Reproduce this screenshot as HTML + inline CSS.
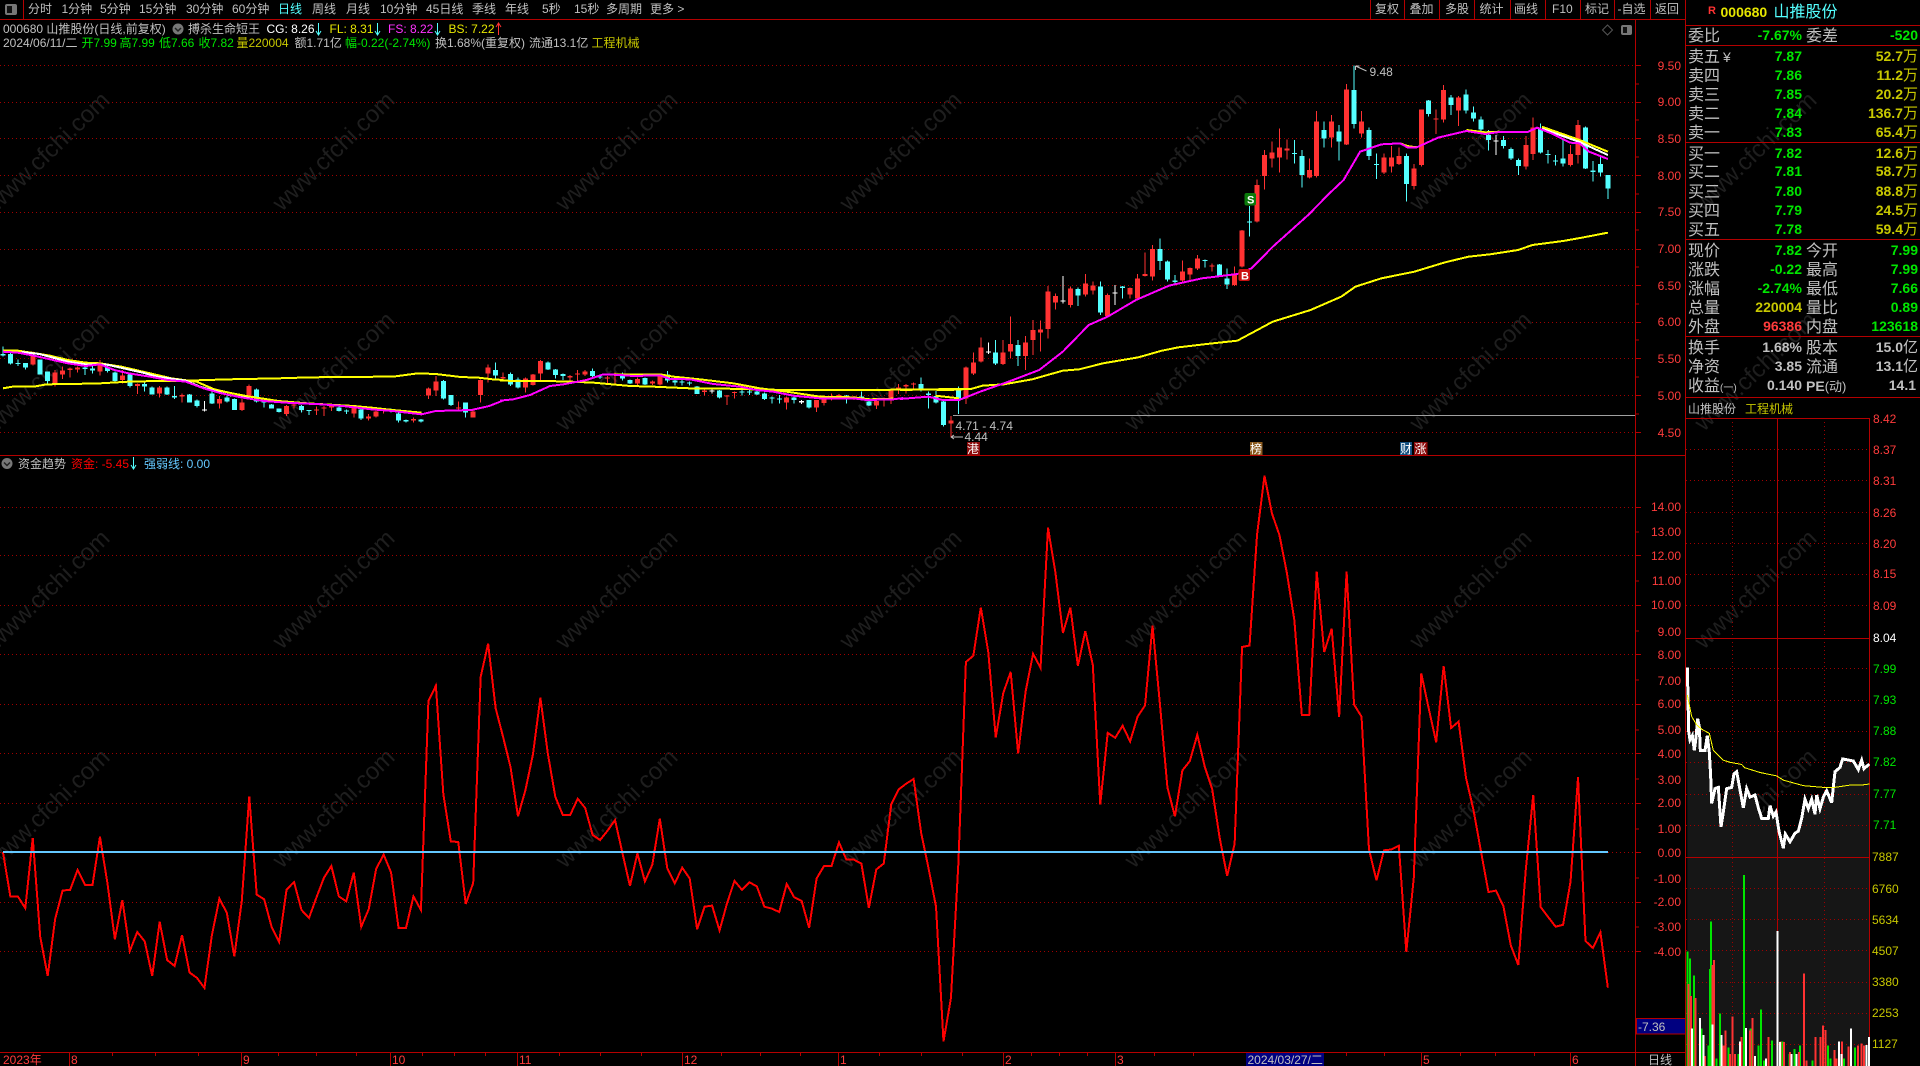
<!DOCTYPE html>
<html lang="zh"><head><meta charset="utf-8"><title>山推股份 000680</title>
<style>
html,body{margin:0;padding:0;background:#000;overflow:hidden;width:1920px;height:1066px}
svg{display:block}
text{font-family:"Liberation Sans","WenQuanYi Zen Hei","Noto Sans CJK SC",sans-serif;font-size:12px;white-space:pre}
.g{fill:#c0c0c0}.r{fill:#ff3c3c}.gr{fill:#00e600}.y{fill:#e6e600}.au{fill:#c8c800}.cy{fill:#54ffff}.m{fill:#ff32ff}.w{fill:#fff}.bl{fill:#64c8ff}
.L text{font-size:16px;fill:#c0c0c0}
.V text,text.V{font-size:14px;font-weight:bold}
.V tspan{font-size:15px}
.e{text-anchor:end}
.wm{font-size:24px;fill:#1e1e1e}
.ln{fill:none;vector-effect:non-scaling-stroke}
path,polyline{vector-effect:non-scaling-stroke}
.crisp{shape-rendering:crispEdges}
.wr,.wc,.ww,.br,.bc,.bw{fill:none}
.wr{stroke:#ff3232;stroke-width:1}.wc{stroke:#54ffff;stroke-width:1}.ww{stroke:#fff;stroke-width:1}
.br{stroke:#ff3232;stroke-width:5}.bc{stroke:#54ffff;stroke-width:5}.bw{stroke:#fff;stroke-width:5}
.mag{stroke:#ff00ff;stroke-width:2}.yel{stroke:#ffff00;stroke-width:2}.whi{stroke:#fff;stroke-width:2}
</style></head><body>
<svg width="1920" height="1066" viewBox="0 0 1920 1066" xmlns="http://www.w3.org/2000/svg">
<!-- watermark -->
<g text-anchor="middle">
<text class="wm" transform="translate(54 157) rotate(-44)">www.cfchi.com</text><text class="wm" transform="translate(339 157) rotate(-44)">www.cfchi.com</text><text class="wm" transform="translate(622 157) rotate(-44)">www.cfchi.com</text><text class="wm" transform="translate(906 157) rotate(-44)">www.cfchi.com</text><text class="wm" transform="translate(1191 157) rotate(-44)">www.cfchi.com</text><text class="wm" transform="translate(1476 157) rotate(-44)">www.cfchi.com</text><text class="wm" transform="translate(1761 157) rotate(-44)">www.cfchi.com</text>
<text class="wm" transform="translate(54 377) rotate(-44)">www.cfchi.com</text><text class="wm" transform="translate(339 377) rotate(-44)">www.cfchi.com</text><text class="wm" transform="translate(622 377) rotate(-44)">www.cfchi.com</text><text class="wm" transform="translate(906 377) rotate(-44)">www.cfchi.com</text><text class="wm" transform="translate(1191 377) rotate(-44)">www.cfchi.com</text><text class="wm" transform="translate(1476 377) rotate(-44)">www.cfchi.com</text><text class="wm" transform="translate(1761 377) rotate(-44)">www.cfchi.com</text>
<text class="wm" transform="translate(54 595) rotate(-44)">www.cfchi.com</text><text class="wm" transform="translate(339 595) rotate(-44)">www.cfchi.com</text><text class="wm" transform="translate(622 595) rotate(-44)">www.cfchi.com</text><text class="wm" transform="translate(906 595) rotate(-44)">www.cfchi.com</text><text class="wm" transform="translate(1191 595) rotate(-44)">www.cfchi.com</text><text class="wm" transform="translate(1476 595) rotate(-44)">www.cfchi.com</text><text class="wm" transform="translate(1761 595) rotate(-44)">www.cfchi.com</text>
<text class="wm" transform="translate(54 814) rotate(-44)">www.cfchi.com</text><text class="wm" transform="translate(339 814) rotate(-44)">www.cfchi.com</text><text class="wm" transform="translate(622 814) rotate(-44)">www.cfchi.com</text><text class="wm" transform="translate(906 814) rotate(-44)">www.cfchi.com</text><text class="wm" transform="translate(1191 814) rotate(-44)">www.cfchi.com</text><text class="wm" transform="translate(1476 814) rotate(-44)">www.cfchi.com</text><text class="wm" transform="translate(1761 814) rotate(-44)">www.cfchi.com</text>
</g>
<!-- mini chart area fill -->
<g transform="translate(1660 400) scale(.33333 .42474)">
<polygon fill="#161616" points="82,630 84,700 86,780 90,800 97,790 103,825 108,795 113,750 118,770 121,825 135,825 142,790 148,830 152,885 155,950 165,915 175,912 183,1005 190,970 200,915 215,912 222,880 230,875 237,905 250,960 260,915 270,935 285,930 295,960 305,985 325,985 330,955 340,980 348,970 357,1015 370,1055 376,1022 390,1040 405,1020 415,1015 425,985 435,940 445,962 455,940 465,975 470,930 480,962 490,935 500,920 515,948 525,875 540,865 548,845 580,850 595,870 605,848 612,868 628,857 628,1568 82,1568"/>
</g>
<!-- dotted grids -->
<path class="crisp" fill="none" stroke="#a00000" stroke-width="1" stroke-dasharray="1 3" d="M0 65.5H1635M0 102.5H1635M0 138.5H1635M0 175.5H1635M0 212.5H1635M0 249.5H1635M0 285.5H1635M0 322.5H1635M0 358.5H1635M0 395.5H1635M0 432.5H1635M0 507.5H1635M0 555.5H1635M0 605.5H1635M0 654.5H1635M0 704.5H1635M0 753.5H1635M0 803.5H1635M0 852.5H1635M0 902.5H1635M0 951.5H1635
M1686 449.5H1869M1686 480.5H1869M1686 512.5H1869M1686 543.5H1869M1686 574.5H1869M1686 605.5H1869M1686 668.5H1869M1686 700.5H1869M1686 731.5H1869M1686 762.5H1869M1686 794.5H1869M1686 825.5H1869M1686 888.5H1869M1686 919.5H1869M1686 950.5H1869M1686 982.5H1869M1686 1013.5H1869M1686 1044.5H1869M1732.5 418V1066M1824.5 418V1066"/>
<!-- solid frame -->
<path class="crisp" fill="none" stroke="#b40000" stroke-width="1" d="M0 19.5H1686M23.5 0V19M1370.5 0V19M1404.5 0V19M1439.5 0V19M1474.5 0V19M1510.5 0V19M1545.5 0V19M1580.5 0V19M1614.5 0V19M1650.5 0V19M0 455.5H1686M0 1052.5H1686M1635.5 19V1066M1685.5 0V1066
M1686 25.5H1920M1686 45.5H1920M1686 142.5H1920M1686 239.5H1920M1686 336.5H1920M1686 397.5H1920M1686 418.5H1869M1686 638.5H1869M1686 857.5H1869M1777.5 418V1066M1869.5 418V1066
M1635 65.5H1641M1635 84H1639M1635 102.5H1641M1635 120H1639M1635 138.5H1641M1635 157H1639M1635 175.5H1641M1635 194H1639M1635 212.5H1641M1635 230H1639M1635 249.5H1641M1635 267H1639M1635 285.5H1641M1635 304H1639M1635 322.5H1641M1635 340H1639M1635 358.5H1641M1635 377H1639M1635 395.5H1641M1635 414H1639M1635 432.5H1641
M1635 507.5H1641M1635 532H1639M1635 555.5H1641M1635 581H1639M1635 605.5H1641M1635 631H1639M1635 654.5H1641M1635 680H1639M1635 704.5H1641M1635 730H1639M1635 753.5H1641M1635 779H1639M1635 803.5H1641M1635 829H1639M1635 852.5H1641M1635 878H1639M1635 902.5H1641M1635 927H1639M1635 951.5H1641
M69.5 1052V1066M241.5 1052V1066M390.5 1052V1066M517.5 1052V1066M682.5 1052V1066M838.5 1052V1066M1003.5 1052V1066M1115.5 1052V1066M1246.5 1052V1066M1421.5 1052V1066M1570.5 1052V1066
M112.5 1052V1056M155.5 1052V1056M198.5 1052V1056M278.5 1052V1056M316.5 1052V1056M356.5 1052V1056M422.5 1052V1056M454.5 1052V1056M485.5 1052V1056M559.5 1052V1056M600.5 1052V1056M641.5 1052V1056M721.5 1052V1056M760.5 1052V1056M800.5 1052V1056M879.5 1052V1056M921.5 1052V1056M962.5 1052V1056M1031.5 1052V1056M1059.5 1052V1056M1087.5 1052V1056M1154.5 1052V1056M1193.5 1052V1056M1346.5 1052V1056M1384.5 1052V1056M1460.5 1052V1056M1495.5 1052V1056M1534.5 1052V1056"/>
<path class="crisp" fill="none" stroke="#a0a0a0" stroke-width="1" d="M953 415.5H1635"/>
<!-- candles A -->
<g class="crisp" transform="translate(2.9 330) scale(7.465 .33333)">
<path class="wr" d="M4 65V106M7 120V170M8 110V147M9 113V143M10 110V128M13 90V137M16 120V160M18 160V192M21 168V203M24 190V218M29 198V236M32 207V243M33 163V205M38 225V258M39 222V236M42 230V255M43 228V258M44 225V243M47 230V263M49 252V272M50 240V262M51 235V250M55 262V278M57 172V207M58 138V198M61 215V238M63 235V263M64 148V218M65 103V158"/>
<path class="br" d="M4 75V103M7 128V160M8 122V133M9 116V120M10 113V118M13 103V125M16 137V150M18 162V168M21 172V190M24 195V200M29 207V220M32 218V240M33 168V198M38 228V252M39 224V227M42 239V242M43 233V236M44 227V232M47 233V250M49 260V265M50 245V260M51 238V241M55 267V271M57 175V197M58 155V182M61 232V235M63 245V262M64 150V195M65 113V130"/>
<path class="wc" d="M0 50V80M1 68V103M2 88V108M3 99V118M5 88V133M6 125V165M11 110V135M12 108V130M14 105V128M15 125V155M17 130V172M19 158V185M20 170V194M22 170V195M23 168V207M25 192V218M26 208V233M28 185V222M30 198V218M31 205V240M34 175V218M35 210V233M36 222V235M37 235V248M40 225V248M41 240V255M45 230V245M46 238V252M48 236V270M52 235V248M53 248V278M54 268V278M56 267V278M59 150V208M60 195V228M62 217V263M66 97V145"/>
<path class="bc" d="M0 72V76M1 72V100M2 99V102M3 99V112M5 88V133M6 125V153M11 113V117M12 116V121M14 112V123M15 127V153M17 133V168M19 162V170M20 172V194M22 172V194M23 198V203M25 194V218M26 212V228M28 190V220M30 203V215M31 207V240M34 178V215M35 215V218M36 223V235M37 236V246M40 228V240M41 240V243M45 232V243M46 242V245M48 238V266M52 238V241M53 250V272M54 270V275M56 268V275M59 153V205M60 195V225M62 218V247M66 120V137"/>
<path class="ww" d="M27 213V245"/><path class="bw" d="M27 238V241"/>
</g>
<!-- candles B -->
<g class="crisp" transform="translate(2.9 340) scale(7.465 .33333)">
<path class="wr" d="M67 98V125M70 112V157M71 102V137M72 60V120M76 105V125M77 90V125M78 90V108M81 108V130M82 97V130M85 112V135M87 122V135M88 103V137M94 148V167M97 165V195M98 155V175M105 170V208M109 180V216M110 175V197M111 160V182M112 162V178M114 168V180M117 178V207M118 172V200M119 150V192M120 132V162M121 132V160M122 128V150"/>
<path class="br" d="M67 111V115M70 116V143M71 103V135M72 63V100M76 108V112M77 100V104M78 95V103M81 112V116M82 101V104M85 117V130M87 125V131M88 106V133M94 152V156M97 167V170M98 156V159M105 172V188M109 180V203M110 178V189M111 175V177M112 165V172M114 172V175M117 183V197M118 178V182M119 152V180M120 142V152M121 135V139M122 130V133"/>
<path class="wc" d="M68 98V138M69 113V145M73 65V90M74 87V115M75 100V120M79 85V113M80 105V117M83 98V122M84 118V132M86 112V135M89 93V128M90 120V137M91 120V137M92 125V137M93 138V162M96 150V175M99 148V167M100 148V165M101 152V165M102 157V180M103 170V190M104 165V190M106 170V190M108 180V205M113 165V190M115 155V180M116 178V198M123 112V155M124 155V205M125 153V190"/>
<path class="bc" d="M68 102V133M69 118V143M73 67V88M74 88V105M75 102V108M79 93V108M80 110V113M83 100V115M84 120V130M86 114V133M89 103V122M90 122V127M91 125V128M92 128V131M93 140V162M96 152V172M99 155V158M100 155V157M101 154V164M102 160V177M103 172V176M104 175V179M106 172V180M108 180V203M113 167V178M115 170V173M116 185V197M123 132V150M124 160V165M125 168V188"/>
<path class="ww" d="M95 145V160M107 180V192"/><path class="bw" d="M95 152V155M107 183V187"/>
</g>
<!-- candles C -->
<g class="crisp" transform="translate(2.9 50) scale(7.465 .33333)">
<path class="wr" d="M127 1098V1162M129 950V1062M130 907V975M131 862V938M134 870V945M135 800V925M137 858V960M138 810V915M139 812V905M140 708V865M141 730V778M143 710V772M145 672V740M146 695V733M148 730V803M151 712V745M152 672V745M153 608V680M154 585V692M158 632V700M159 652V695M160 615V660M162 640V665M165 650V708M166 540V652M168 388V518M169 300V418M170 275V352M171 235V368M172 268V328M175 325V385M176 183V382M178 195V292M180 102V285M182 183V262M185 310V372M186 288V368M187 292V345M189 342V418M190 178V350M192 178V252M193 105V218M195 138V228M204 258V358"/>
<path class="br" d="M127 1112V1120M129 952V1045M130 937V970M131 892V935M134 907V942M135 882V905M137 877V918M138 840V870M139 838V848M140 725V837M141 738V757M143 715V765M145 700V733M146 706V722M148 735V798M151 714V733M152 686V745M153 672V678M154 597V680M158 665V692M159 654V673M160 625V655M162 646V650M165 675V705M166 541V650M168 405V515M169 315V378M170 308V325M171 292V322M172 295V302M175 360V382M176 215V378M178 215V262M180 118V283M182 215V250M185 322V368M186 322V350M187 318V342M189 355V408M190 178V345M192 206V209M193 120V208M195 142V182M204 285V350"/>
<path class="wc" d="M126 1050V1130M128 1010V1092M133 870V945M136 870V948M144 712V768M147 695V795M150 708V745M155 565V660M156 632V695M157 675V705M161 628V652M163 642V680M164 655V717M167 468V560M173 270V340M174 300V412M177 215V292M179 225V332M181 47V235M183 232V330M184 310V387M188 310V455M191 150V200M194 135V195M196 118V190M197 170V215M198 200V245M199 240V302M201 258V295M202 292V330M203 325V375"/>
<path class="bc" d="M126 1055V1125M128 1015V1045M133 907V940M136 885V918M144 717V737M147 710V788M150 710V714M155 597V633M156 635V688M157 692V696M161 630V633M163 644V678M164 686V703M167 515V518M173 309V312M174 318V375M177 240V265M179 245V275M181 120V222M183 240V318M184 342V345M188 318V402M191 152V192M194 142V165M196 133V182M197 188V205M198 208V238M199 255V270M201 270V288M202 297V325M203 330V348"/>
<path class="ww" d="M132 877V912M142 678V760M149 705V765M200 255V315"/><path class="bw" d="M132 905V908M142 752V755M149 727V730M200 272V275"/>
</g>
<!-- candles D -->
<g class="crisp" transform="translate(2.9 0) scale(7.465 .33333)">
<path class="wr" d="M205 352V480M210 435V500M211 360V490"/><path class="br" d="M205 382V462M210 462V495M211 375V465"/>
<path class="wc" d="M206 370V460M207 450V490M208 465V497M209 415V500M212 380V507M213 483V545M214 465V530M215 525V597"/>
<path class="bc" d="M206 385V458M207 462V465M208 482V485M209 475V490M212 382V505M213 512V516M214 492V517M215 525V565"/>
</g>
<!-- MA lines -->
<g class="crisp" transform="translate(0 330) scale(.35714 .33333)">
<polyline class="ln yel" points="8,175 35,170 95,170 130,163 200,162 280,160 360,155 440,153 520,152 640,148 780,145 870,142 1070,140 1100,140 1170,130 1220,132 1290,141 1340,143 1380,148 1410,150"/>
<polyline class="ln yel" points="8,62 50,62 100,70 140,77 190,90 240,98 280,100 340,110 400,125 440,135 480,145 550,155 600,178 650,190 700,200 780,213 860,220 990,228 1040,233 1100,240 1180,248"/>
<polyline class="ln whi" points="60,66 110,72 190,95 240,103 300,104 400,128 440,140 520,152 560,170 640,195 700,205"/>
<polyline class="ln mag" points="8,65 50,68 95,77 140,88 190,100 240,108 280,103 320,120 360,130 420,140 470,150 520,155 570,175 620,190 680,203 740,213 800,218 900,223 960,228 1040,238 1100,243 1180,253 1220,243 1320,240 1370,228 1410,211"/>
</g>
<g class="crisp" transform="translate(500 340) scale(.33333 .33333)">
<polyline class="ln yel" points="0,122 190,124 280,128 390,138 460,140 570,145 640,145 760,148 860,150 1130,150 1240,148 1350,150 1400,147"/>
<polyline class="ln yel" points="330,103 480,103 520,110 600,118 700,130 780,145 860,155 960,170 1060,172 1110,178 1180,176"/>
<polyline class="ln mag" points="0,182 40,178 90,165 150,138 190,133 260,120 310,103 360,105 400,108 480,106 510,117 570,118 640,132 720,140 770,150 820,155 880,167 960,175 1060,175 1100,180 1180,178 1210,174"/>
</g>
<g class="crisp" transform="translate(900 50) scale(.47192 .33333)">
<polyline class="ln yel" points="0,1020 110,1017 150,1017 175,1007 220,1003 280,988 345,962 380,958 430,940 505,922 555,902 590,892 650,882 715,872 790,815 870,780 935,740 965,710 1020,685 1090,665 1155,637 1205,620 1250,613 1310,600 1340,585 1405,573 1445,563 1500,548"/>
<polyline class="ln yel" points="75,1037 125,1045"/>
<polyline class="ln yel" points="1060,280 1075,288 1095,292"/>
<polyline class="ln yel" points="1200,240 1240,247 1270,245"/>
<polyline class="ln yel" points="1360,230 1440,270 1500,305"/>
<polyline class="ln whi" points="1360,236 1440,276 1500,315"/>
<polyline class="ln mag" points="0,1047 60,1040 90,1050 125,1050 170,1025 230,995 295,960 345,905 400,825 440,800 500,750 570,707 640,685 715,672 745,655 790,590 865,495 910,430 940,390 975,305 1020,283 1060,280 1075,292 1095,292 1140,263 1200,243 1240,252 1270,246 1330,246 1350,233 1380,250 1420,278 1440,280 1460,305 1500,327"/>
</g>
<!-- indicator -->
<g class="crisp" transform="translate(2.9 0) scale(7.465 1)">
<polyline class="ln" stroke="#ff0000" stroke-width="2" points="0,851.8 1,896.4 2,896.4 3,908.2 4,837.9 5,936.8 6,976 7,919 8,890.4 9,890 10,870 11,885 12,885 13,836.8 14,883 15,939.3 16,900 17,951 18,932 19,941.4 20,976 21,921.8 22,960 23,966 24,935 25,972.5 26,977.9 27,987.9 28,935 29,898.6 30,912.9 31,956.4 32,901 33,796.4 34,894.6 35,899.3 36,927 37,942 38,889.6 39,882 40,910 41,918 42,897.5 43,877.9 44,866 45,896.4 46,901.4 47,872.5 48,926.8 49,909.3 50,869 51,854.6 52,872.5 53,927.9 54,927.9 55,896.4 56,910 57,701 58,685.7 59,794 60,841.4 61,842 62,904 63,883 64,677 65,643.6 66,708 67,736.8 68,767 69,816.4 70,790 71,754.6 72,697.7 73,753.6 74,796.8 75,814.9 76,814.9 77,798.7 78,808 79,835 80,840 81,830.7 82,820 83,853.3 84,886 85,853.3 86,881.5 87,864.6 88,818.7 89,868.3 90,883.4 91,867.6 92,878.5 93,929.3 94,906.7 95,905.6 96,930.5 97,903.4 98,880.8 99,889.8 100,882.3 101,886.4 102,906.7 103,908.6 104,912 105,884 106,897.3 107,901 108,927.8 109,878.5 110,866 111,866 112,842.4 113,859.7 114,859.7 115,863.5 116,907.9 117,869.5 118,863.5 119,804.4 120,789.3 121,783.7 122,779 123,832.6 124,868.3 125,906.7 126,1041.5 127,998 128,862.7 129,662 130,655.7 131,607.5 132,652 133,737.4 134,693.3 135,671.9 136,753.6 137,691.5 138,653.8 139,667.8 140,527.7 141,572.9 142,633 143,607.5 144,665.9 145,631 146,665 147,804.4 148,732.9 149,737.8 150,725.7 151,741.5 152,716.7 153,705.4 154,625.6 155,704.6 156,787.4 157,816.4 158,770.5 159,761 160,734.7 161,766.7 162,789.3 163,838 164,875.9 165,843.9 166,647 167,645.5 168,535 169,475.8 170,513.4 171,535 172,572.9 173,620 174,714.8 175,714.8 176,571.8 177,652 178,628.6 179,716.7 180,571.8 181,704.6 182,716.7 183,849.5 184,880.4 185,850.3 186,849.5 187,845.8 188,951.9 189,877.8 190,673.4 191,708.4 192,742.3 193,665.9 194,728 195,721.6 196,778 197,810 198,851.4 199,892 200,890.6 201,906 202,945.5 203,965 204,870 205,795 206,907 207,917 208,926.7 209,924.8 210,881.5 211,777.3 212,941 213,948 214,932.3 215,987.7"/>
</g>
<path class="crisp" stroke="#64c8ff" stroke-width="2" fill="none" d="M3 852H1608"/>
<!-- mini chart -->
<g transform="translate(1660 400) scale(.33333 .42474)">
<path class="ln crisp" stroke="#00e600" stroke-width="2" d="M82 1298V1568M90 1315V1568M102 1355V1568M125 1480V1568M145 1520V1568M150 1340V1568M153 1228V1568M170 1550V1568M180 1445V1568M205 1525V1568M235 1540V1568M252 1118V1568M272 1480V1568M295 1520V1568M303 1435V1568M312 1555V1568M336 1508V1568M368 1510V1568M388 1540V1568M403 1528V1568M420 1520V1568M458 1555V1568M504 1520V1568M512 1550V1568M552 1550V1568M585 1525V1568"/>
<path class="ln crisp" stroke="#ff3232" stroke-width="2" d="M85 1375V1568M93 1403V1568M107 1408V1568M135 1545V1568M158 1330V1568M162 1318V1568M190 1520V1568M197 1485V1568M210 1540V1568M218 1452V1568M225 1540V1568M245 1500V1568M270 1485V1568M278 1455V1568M325 1500V1568M362 1510V1568M372 1512V1568M390 1535V1568M417 1535V1568M432 1350V1568M440 1555V1568M467 1500V1568M482 1500V1568M489 1473V1568M497 1483V1568M524 1530V1568M530 1550V1568M546 1510V1568M566 1522V1568M594 1520V1568M605 1515V1568M612 1520V1568"/>
<path class="ln crisp" stroke="#ffffff" stroke-width="2" d="M96 1480V1568M120 1455V1568M130 1495V1568M157 1470V1568M185 1495V1568M240 1510V1568M258 1478V1568M285 1545V1568M318 1550V1568M353 1250V1568M360 1512V1568M395 1540V1568M410 1540V1568M537 1510V1568M545 1540V1568M573 1480V1568M620 1518V1568M627 1500V1568"/>
<polyline class="ln crisp" stroke="#ffffff" stroke-width="3" points="82,630 84,700 86,780 90,800 97,790 103,825 108,795 113,750 118,770 121,825 135,825 142,790 148,830 152,885 155,950 165,915 175,912 183,1005 190,970 200,915 215,912 222,880 230,875 237,905 250,960 260,915 270,935 285,930 295,960 305,985 325,985 330,955 340,980 348,970 357,1015 370,1055 376,1022 390,1040 405,1020 415,1015 425,985 435,940 445,962 455,940 465,975 470,930 480,962 490,935 500,920 515,948 525,875 540,865 548,845 580,850 595,870 605,848 612,868 628,857"/>
<polyline class="ln crisp" stroke="#ffff00" stroke-width="1" points="82,695 95,745 110,765 125,775 148,785 160,825 190,848 210,853 245,858 255,866 300,877 350,885 370,895 430,908 490,912 525,912 575,906 610,906 628,904"/>
</g>
<!-- top toolbar -->
<rect x="5" y="4" width="12" height="11" rx="2" fill="#777"/><rect x="7" y="6" width="5" height="7" fill="#111"/>
<g class="g">
<text x="28" y="13">分时</text><text x="61.5" y="13">1分钟</text><text x="100" y="13">5分钟</text><text x="139" y="13">15分钟</text><text x="186" y="13">30分钟</text><text x="232" y="13">60分钟</text><text class="cy" x="278" y="13">日线</text><text x="312" y="13">周线</text><text x="346" y="13">月线</text><text x="380" y="13">10分钟</text><text x="426" y="13">45日线</text><text x="472" y="13">季线</text><text x="505" y="13">年线</text><text x="542" y="13">5秒</text><text x="574" y="13">15秒</text><text x="606" y="13">多周期</text><text x="650" y="13">更多 &gt;</text>
<text x="1375" y="13">复权</text><text x="1409.5" y="13">叠加</text><text x="1445" y="13">多股</text><text x="1479.5" y="13">统计</text><text x="1514" y="13">画线</text><text x="1552" y="13">F10</text><text x="1585" y="13">标记</text><text x="1617.5" y="13">-自选</text><text x="1655" y="13">返回</text>
</g>
<!-- chart header -->
<text class="g" x="3" y="33">000680 山推股份(日线,前复权)</text>
<circle cx="178" cy="29" r="5.5" fill="#777"/><path d="M175 28l3 3 3-3" fill="none" stroke="#222" stroke-width="1.5"/>
<text class="g" x="188" y="33">搏杀生命短王</text>
<text class="w" x="266.5" y="33">CG: 8.26</text>
<path fill="none" stroke="#54ffff" d="M318.5 23V35M316 31l2.500 4 2.500-4M377.500 23V35M375 31l2.500 4 2.500-4M437.500 23V35M435 31l2.500 4 2.500-4"/>
<text class="y" x="329.500" y="33">FL: 8.31</text>
<text class="m" x="388" y="33">FS: 8.22</text>
<text class="y" x="448.500" y="33">BS: 7.22</text>
<path fill="none" stroke="#ff3232" d="M498.500 23V35M496 27l2.500-4 2.500 4"/>
<text class="g" x="3" y="47">2024/06/11/二</text>
<text class="gr" x="81.500" y="47">开7.99</text><text class="gr" x="119.500" y="47">高7.99</text><text class="gr" x="159" y="47">低7.66</text><text class="gr" x="198.500" y="47">收7.82</text>
<text class="au" x="236.500" y="47">量220004</text><text class="g" x="294.500" y="47">额1.71亿</text>
<text class="gr" x="345" y="47">幅-0.22(-2.74%)</text><text class="g" x="435" y="47">换1.68%(重复权)</text><text class="g" x="529" y="47">流通13.1亿</text><text class="au" x="591.500" y="47">工程机械</text>
<!-- top right icons -->
<path d="M1607.500 25l5 5-5 5-5-5z" fill="none" stroke="#555"/>
<rect x="1621" y="25" width="11" height="10" rx="2" fill="#777"/><rect x="1623" y="27" width="4" height="6" fill="#111"/>
<!-- price annotations -->
<path fill="none" stroke="#c0c0c0" d="M1355.500 66l11 5M1355.500 66l4 0M1355.500 66v4"/>
<text class="g" x="1369.500" y="76">9.48</text>
<text class="g" x="955.500" y="430">4.71 - 4.74</text>
<path fill="none" stroke="#c0c0c0" d="M951 437h12M951 437l3-2M951 437l3 2"/>
<text class="g" x="964.500" y="441">4.44</text>
<rect x="967" y="442" width="13" height="13" fill="#8b0a0a"/><text class="w" x="967" y="453">港</text>
<rect x="1250" y="442" width="12.500" height="13" fill="#8b5a1e"/><text class="w" x="1250" y="453">榜</text>
<rect x="1400" y="442" width="12" height="13" fill="#104e7e"/><text class="w" x="1400" y="453">财</text>
<rect x="1414" y="442" width="13.500" height="13" fill="#8b0a0a"/><text class="w" x="1414.500" y="453">涨</text>
<rect x="1244.500" y="193" width="11.500" height="12.500" rx="2" fill="#0a7a0a"/><text class="w" x="1247" y="203.500" style="font-size:11px;font-weight:bold">S</text>
<rect x="1238.500" y="269" width="11.500" height="12" rx="2" fill="#cc1010"/><text class="w" x="1241" y="279.500" style="font-size:11px;font-weight:bold">B</text>
<!-- price axis -->
<g class="r e">
<text x="1681" y="70">9.50</text><text x="1681" y="106">9.00</text><text x="1681" y="143">8.50</text><text x="1681" y="180">8.00</text><text x="1681" y="216">7.50</text><text x="1681" y="253">7.00</text><text x="1681" y="290">6.50</text><text x="1681" y="326">6.00</text><text x="1681" y="363">5.50</text><text x="1681" y="400">5.00</text><text x="1681" y="437">4.50</text>
<text x="1681" y="511">14.00</text><text x="1681" y="536">13.00</text><text x="1681" y="560">12.00</text><text x="1681" y="585">11.00</text><text x="1681" y="609">10.00</text><text x="1681" y="636">9.00</text><text x="1681" y="659">8.00</text><text x="1681" y="685">7.00</text><text x="1681" y="708">6.00</text><text x="1681" y="734">5.00</text><text x="1681" y="758">4.00</text><text x="1681" y="784">3.00</text><text x="1681" y="807">2.00</text><text x="1681" y="833">1.00</text><text x="1681" y="857">0.00</text><text x="1681" y="883">-1.00</text><text x="1681" y="906">-2.00</text><text x="1681" y="931">-3.00</text><text x="1681" y="956">-4.00</text>
</g>
<rect class="crisp" x="1636.500" y="1018.500" width="49" height="15.500" fill="#000080" stroke="#b40000"/>
<text class="g" x="1638" y="1031">-7.36</text>
<text class="g" x="1648" y="1064">日线</text>
<!-- indicator header -->
<circle cx="7" cy="463.500" r="5.500" fill="#777"/><path d="M4 462.500l3 3 3-3" fill="none" stroke="#222" stroke-width="1.500"/>
<text class="g" x="18" y="468">资金趋势</text>
<text fill="#ff0000" x="71" y="468">资金: -5.45</text>
<path fill="none" stroke="#54ffff" d="M133.500 457V469M131 465l2.500 4 2.500-4"/>
<text class="bl" x="144" y="468">强弱线: 0.00</text>
<!-- bottom axis -->
<g class="r">
<text x="3" y="1064">2023年</text><text x="71" y="1064">8</text><text x="243" y="1064">9</text><text x="392" y="1064">10</text><text x="519" y="1064">11</text><text x="684" y="1064">12</text><text x="840" y="1064">1</text><text x="1005" y="1064">2</text><text x="1117" y="1064">3</text><text x="1423" y="1064">5</text><text x="1572" y="1064">6</text>
</g>
<rect x="1246" y="1053" width="78" height="13" fill="#000080"/>
<text class="g" x="1247.500" y="1064">2024/03/27/二</text>
<!-- right panel -->
<text x="1708" y="14" fill="#ff3232" style="font-size:11px;font-weight:bold">R</text>
<text class="y V" x="1720.500" y="17">000680</text>
<text class="cy" x="1773.500" y="17" style="font-size:16px">山推股份</text>

<g class="L">
<text x="1688" y="41">委比</text><text x="1806" y="41">委差</text>
<text x="1688" y="62">卖五</text><text x="1688" y="81">卖四</text><text x="1688" y="100">卖三</text><text x="1688" y="119">卖二</text><text x="1688" y="138">卖一</text>
<text x="1688" y="159">买一</text><text x="1688" y="177">买二</text><text x="1688" y="197">买三</text><text x="1688" y="216">买四</text><text x="1688" y="235">买五</text>
<text x="1688" y="256">现价</text><text x="1688" y="275">涨跌</text><text x="1688" y="294">涨幅</text><text x="1688" y="313">总量</text><text x="1688" y="332">外盘</text>
<text x="1806" y="256">今开</text><text x="1806" y="275">最高</text><text x="1806" y="294">最低</text><text x="1806" y="313">量比</text><text x="1806" y="332">内盘</text>
<text x="1688" y="353">换手</text><text x="1688" y="372">净资</text><text x="1688" y="391">收益<tspan style="font-size:10px">(一)</tspan></text>
<text x="1806" y="353">股本</text><text x="1806" y="372">流通</text><text x="1806" y="391"><tspan style="font-size:14px;font-weight:bold">PE</tspan><tspan style="font-size:13px">(动)</tspan></text>
</g>
<text class="g" x="1723" y="62" style="font-size:14px">¥</text>
<g class="V e gr">
<text x="1802" y="40">-7.67%</text><text x="1918" y="40">-520</text>
<text x="1802" y="61">7.87</text><text x="1802" y="80">7.86</text><text x="1802" y="99">7.85</text><text x="1802" y="118">7.84</text><text x="1802" y="137">7.83</text>
<text x="1802" y="158">7.82</text><text x="1802" y="176">7.81</text><text x="1802" y="196">7.80</text><text x="1802" y="215">7.79</text><text x="1802" y="234">7.78</text>
<text x="1802" y="255">7.82</text><text x="1802" y="274">-0.22</text><text x="1802" y="293">-2.74%</text>
<text x="1918" y="255">7.99</text><text x="1918" y="274">7.99</text><text x="1918" y="293">7.66</text><text x="1918" y="331">123618</text>
</g>
<g class="V e au">
<text x="1918" y="61">52.7<tspan font-weight="normal">万</tspan></text><text x="1918" y="80">11.2<tspan font-weight="normal">万</tspan></text><text x="1918" y="99">20.2<tspan font-weight="normal">万</tspan></text><text x="1918" y="118">136.7<tspan font-weight="normal">万</tspan></text><text x="1918" y="137">65.4<tspan font-weight="normal">万</tspan></text>
<text x="1918" y="158">12.6<tspan font-weight="normal">万</tspan></text><text x="1918" y="176">58.7<tspan font-weight="normal">万</tspan></text><text x="1918" y="196">88.8<tspan font-weight="normal">万</tspan></text><text x="1918" y="215">24.5<tspan font-weight="normal">万</tspan></text><text x="1918" y="234">59.4<tspan font-weight="normal">万</tspan></text>
<text x="1802" y="312">220004</text>
</g>
<text class="V e gr" x="1918" y="312">0.89</text>
<text class="V e r" x="1802" y="331">96386</text>
<g class="V e g">
<text x="1802" y="352">1.68%</text><text x="1802" y="371">3.85</text><text x="1802" y="390">0.140</text>
<text x="1918" y="352">15.0<tspan font-weight="normal">亿</tspan></text><text x="1918" y="371">13.1<tspan font-weight="normal">亿</tspan></text><text x="1916" y="390">14.1</text>
</g>
<text class="g" x="1688" y="413" style="font-size:12px">山推股份</text><text class="au" x="1745" y="413">工程机械</text>
<!-- mini axis -->
<g class="r">
<text x="1873" y="423">8.42</text><text x="1873" y="454">8.37</text><text x="1873" y="485">8.31</text><text x="1873" y="517">8.26</text><text x="1873" y="548">8.20</text><text x="1873" y="578">8.15</text><text x="1873" y="610">8.09</text>
</g>
<text class="w" x="1873" y="642">8.04</text>
<g class="gr">
<text x="1873" y="673">7.99</text><text x="1873" y="704">7.93</text><text x="1873" y="735">7.88</text><text x="1873" y="766">7.82</text><text x="1873" y="798">7.77</text><text x="1873" y="829">7.71</text>
</g>
<g class="au">
<text x="1872" y="861">7887</text><text x="1872" y="893">6760</text><text x="1872" y="924">5634</text><text x="1872" y="955">4507</text><text x="1872" y="986">3380</text><text x="1872" y="1017">2253</text><text x="1872" y="1048">1127</text>
</g>
</svg>
</body></html>
